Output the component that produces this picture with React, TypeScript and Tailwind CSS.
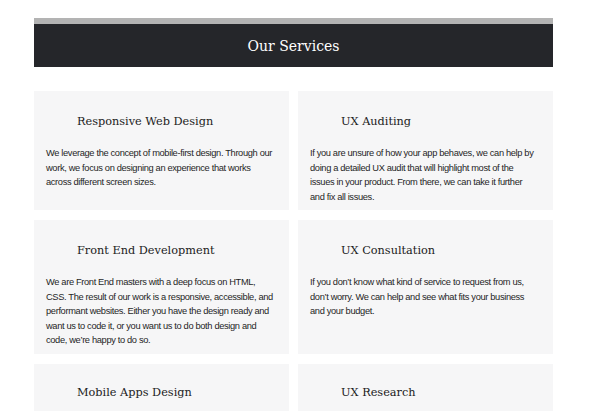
const services = [
  {
    title: "Responsive Web Design",
    lines: [
      "We leverage the concept of mobile-first design. Through our",
      "work, we focus on designing an experience that works",
      "across different screen sizes.",
    ],
  },
  {
    title: "UX Auditing",
    lines: [
      "If you are unsure of how your app behaves, we can help by",
      "doing a detailed UX audit that will highlight most of the",
      "issues in your product. From there, we can take it further",
      "and fix all issues.",
    ],
  },
  {
    title: "Front End Development",
    lines: [
      "We are Front End masters with a deep focus on HTML,",
      "CSS. The result of our work is a responsive, accessible, and",
      "performant websites. Either you have the design ready and",
      "want us to code it, or you want us to do both design and",
      "code, we’re happy to do so.",
    ],
  },
  {
    title: "UX Consultation",
    lines: [
      "If you don’t know what kind of service to request from us,",
      "don’t worry. We can help and see what fits your business",
      "and your budget.",
    ],
  },
  { title: "Mobile Apps Design", lines: [] as string[] },
  { title: "UX Research", lines: [] as string[] },
];

export default function App() {
  return (
    <div className="min-h-[419px] bg-white pt-[18px]">
      <div className="ml-[34px] w-[519px]">
        {/* Header */}
        <div className="border-t-[6px] border-[#b3b3b3] bg-[#25262a] h-[49px] flex items-center justify-center">
          <h1 className="text-[14px] leading-none text-white font-['DejaVu_Serif',serif]">
            Our Services
          </h1>
        </div>

        {/* Cards */}
        <div className="mt-[24px] grid grid-cols-2 gap-x-[9px] gap-y-[10px]">
          {services.map((s) => (
            <div
              key={s.title}
              className={
                s.lines.length
                  ? "bg-[#f6f6f7] pl-[12px] pr-[5px] pt-[21px] pb-[6px]"
                  : "bg-[#f6f6f7] pl-[12px] pr-[5px] pt-[19px] h-[47px]"
              }
            >
              <h3 className="pl-[31px] text-[11.3px] leading-[20px] text-[#1b1b1b] font-['DejaVu_Serif',serif]">
                {s.title}
              </h3>
              {s.lines.length > 0 && (
                <p className="mt-[14px] text-[9.3px] tracking-[-0.35px] leading-[14.5px] text-[#1f1f1f] font-['Liberation_Sans',Arial,sans-serif]">
                  {s.lines.map((l) => (
                    <span key={l} className="block whitespace-nowrap">
                      {l}
                    </span>
                  ))}
                </p>
              )}
            </div>
          ))}
        </div>
      </div>
    </div>
  );
}
